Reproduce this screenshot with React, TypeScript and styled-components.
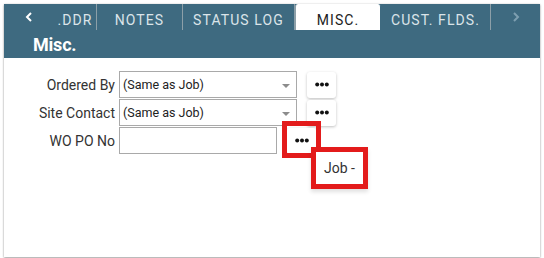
import React from "react";
import styled, { createGlobalStyle } from "styled-components";

const GlobalStyle = createGlobalStyle`
  html, body {
    margin: 0;
    padding: 0;
    background: #ffffff;
    font-family: Roboto, "Liberation Sans", Arial, sans-serif;
  }
`;

const Page = styled.div`
  padding: 4px 4px 0 4px;
  width: 544px;
  height: 258px;
  box-sizing: border-box;
`;

const Card = styled.div`
  position: relative;
  width: 536px;
  height: 253px;
  background: #ffffff;
  box-shadow: 0 1px 2px rgba(0, 0, 0, 0.35), 0 0 2px rgba(0, 0, 0, 0.12);
`;

const Header = styled.div`
  height: 54px;
  background: #3e6a80;
  display: flex;
  flex-direction: column;
`;

const TabBar = styled.div`
  height: 26px;
  display: flex;
  align-items: stretch;
`;

const Arrow = styled.div<{ $dim?: boolean }>`
  width: ${(p) => (p.$dim ? "49px" : "50px")};
  display: flex;
  align-items: center;
  justify-content: center;
  color: ${(p) => (p.$dim ? "#7e9fb0" : "#ffffff")};
  flex-shrink: 0;
`;

const TabStrip = styled.div`
  display: flex;
  flex: 1;
  overflow: hidden;
  justify-content: flex-end;
`;

const Tab = styled.div<{ $active?: boolean; $w: number }>`
  width: ${(p) => p.$w}px;
  flex-shrink: 0;
  box-sizing: border-box;
  display: flex;
  align-items: center;
  justify-content: center;
  padding-top: 6px;
  font-size: 14px;
  letter-spacing: 1.1px;
  white-space: nowrap;
  overflow: hidden;
  color: ${(p) => (p.$active ? "#1c1c1c" : "#dbe4e9")};
  background: ${(p) => (p.$active ? "#ffffff" : "transparent")};
  border-radius: ${(p) => (p.$active ? "3px 3px 0 0" : "0")};
  border-right: 1px solid ${(p) => (p.$active ? "#3e6a80" : "#8c9fa8")};
  border-left: ${(p) => (p.$active ? "1px solid #8c9fa8" : "none")};
`;

const Title = styled.div`
  padding: 4px 0 0 29px;
  font-size: 18px;
  font-weight: 700;
  color: #ffffff;
  letter-spacing: -0.2px;
`;

const Form = styled.div`
  padding-top: 13px;
  display: flex;
  flex-direction: column;
  gap: 1px;
`;

const Row = styled.div`
  display: flex;
  align-items: center;
  height: 27px;
`;

const Label = styled.div`
  width: 115px;
  padding-right: 4px;
  box-sizing: border-box;
  text-align: right;
  font-size: 14px;
  color: #333333;
`;

const Field = styled.div<{ $w: number }>`
  width: ${(p) => p.$w}px;
  height: 27px;
  box-sizing: border-box;
  border: 1px solid #a9a9a9;
  display: flex;
  align-items: center;
  justify-content: space-between;
  padding: 0 6px 0 3px;
  font-size: 12.5px;
  color: #222222;
  background: #ffffff;
`;

const Caret = styled.span`
  width: 0;
  height: 0;
  border-left: 4px solid transparent;
  border-right: 4px solid transparent;
  border-top: 4px solid #8c8c8c;
  margin-top: 3px;
`;

const DotsButton = styled.div`
  width: 29px;
  height: 26px;
  margin-left: 10px;
  border-radius: 3px;
  background: #ffffff;
  box-shadow: 0 1px 3px rgba(0, 0, 0, 0.25);
  display: flex;
  align-items: center;
  justify-content: center;
  color: #111111;
`;

const Mark = styled.div<{ $x: number; $y: number; $w: number; $h: number }>`
  position: absolute;
  left: ${(p) => p.$x}px;
  top: ${(p) => p.$y}px;
  width: ${(p) => p.$w}px;
  height: ${(p) => p.$h}px;
  box-sizing: border-box;
  border: 5px solid #e31b1b;
`;

const Popup = styled(Mark)`
  background: #ffffff;
  box-shadow: 0 3px 4px rgba(0, 0, 0, 0.12);
  display: flex;
  align-items: center;
  justify-content: center;
  font-size: 14px;
  color: #333333;
`;

const Chevron = ({ dir }: { dir: "l" | "r" }) => (
  <svg width="8" height="10" viewBox="0 0 8 10">
    <path
      d={dir === "l" ? "M6 1 L2 5 L6 9" : "M2 1 L6 5 L2 9"}
      fill="none"
      stroke="currentColor"
      strokeWidth="2"
    />
  </svg>
);

const Dots = () => (
  <svg width="14" height="5" viewBox="0 0 14 5">
    <circle cx="2.2" cy="2.5" r="2" fill="currentColor" />
    <circle cx="7" cy="2.5" r="2" fill="currentColor" />
    <circle cx="11.8" cy="2.5" r="2" fill="currentColor" />
  </svg>
);

const tabs = [
  { label: "ADDR", w: 43 },
  { label: "NOTES", w: 86 },
  { label: "STATUS LOG", w: 112 },
  { label: "MISC.", w: 86, active: true },
  { label: "CUST. FLDS.", w: 110 },
];

export default function App() {
  return (
    <>
      <GlobalStyle />
      <Page>
        <Card>
          <Header>
            <TabBar>
              <Arrow>
                <Chevron dir="l" />
              </Arrow>
              <TabStrip>
                {tabs.map((t) => (
                  <Tab key={t.label} $w={t.w} $active={t.active}>
                    {t.label === "ADDR" ? ".DDR" : t.label}
                  </Tab>
                ))}
              </TabStrip>
              <Arrow $dim>
                <Chevron dir="r" />
              </Arrow>
            </TabBar>
            <Title>Misc.</Title>
          </Header>
          <Form>
            <Row>
              <Label>Ordered By</Label>
              <Field $w={178}>
                (Same as Job)
                <Caret />
              </Field>
              <DotsButton>
                <Dots />
              </DotsButton>
            </Row>
            <Row>
              <Label>Site Contact</Label>
              <Field $w={178}>
                (Same as Job)
                <Caret />
              </Field>
              <DotsButton>
                <Dots />
              </DotsButton>
            </Row>
            <Row>
              <Label>WO PO No</Label>
              <Field $w={158} />
              <DotsButton>
                <Dots />
              </DotsButton>
            </Row>
          </Form>
          <Mark $x={278} $y={117} $w={39} $h={37} />
          <Popup $x={307} $y={143} $w={57} $h={42}>
            Job -
          </Popup>
        </Card>
      </Page>
    </>
  );
}
